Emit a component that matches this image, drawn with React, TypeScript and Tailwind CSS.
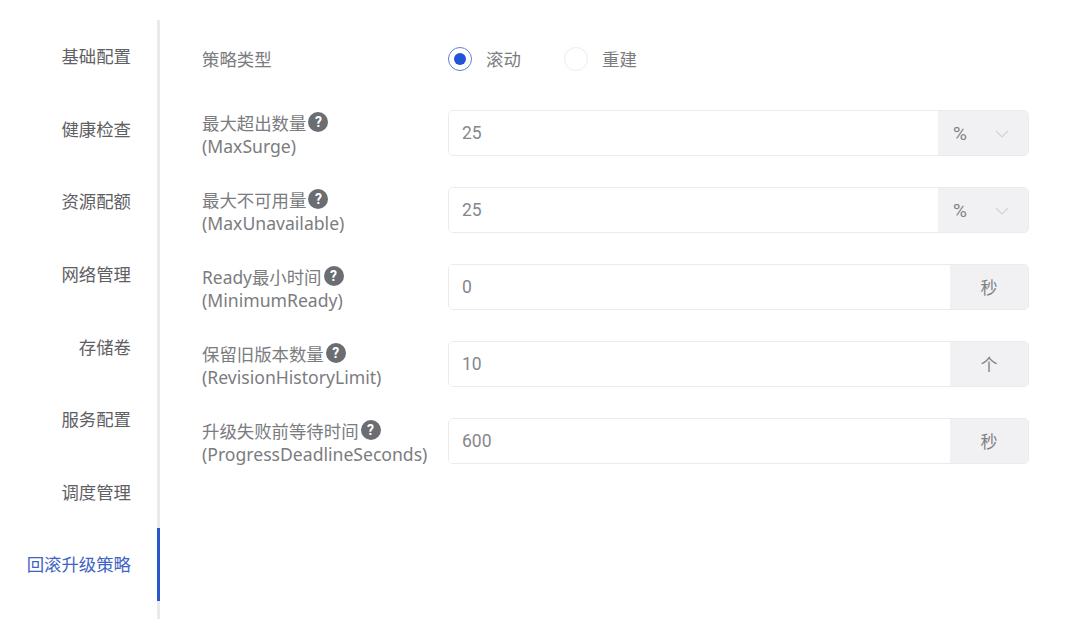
const FONT = "font-['Noto_Sans','Noto_Sans_CJK_SC',sans-serif]";

const nav = ["基础配置", "健康检查", "资源配额", "网络管理", "存储卷", "服务配置", "调度管理", "回滚升级策略"];

const rows = [
  { zh: "最大超出数量", en: "(MaxSurge)", value: "25", unit: "%", select: true },
  { zh: "最大不可用量", en: "(MaxUnavailable)", value: "25", unit: "%", select: true },
  { zh: "Ready最小时间", en: "(MinimumReady)", value: "0", unit: "秒", select: false },
  { zh: "保留旧版本数量", en: "(RevisionHistoryLimit)", value: "10", unit: "个", select: false },
  { zh: "升级失败前等待时间", en: "(ProgressDeadlineSeconds)", value: "600", unit: "秒", select: false },
];

function Help() {
  return (
    <span className="mt-[2px] ml-[2px] inline-flex h-[20px] w-[20px] items-center justify-center rounded-full bg-[#6b6d72] font-['Roboto',sans-serif] text-[14px] leading-none font-bold text-white">
      ?
    </span>
  );
}

function Chevron() {
  return (
    <svg width="14" height="8" viewBox="0 0 14 8" fill="none" stroke="#d3d4d8" strokeWidth="1.2">
      <path d="M1 1l6 6 6-6" />
    </svg>
  );
}

export default function App() {
  return (
    <div className={`${FONT} flex h-[619px] w-[1080px] overflow-hidden bg-white pt-[20px]`}>
      <nav className="h-full w-[160px] shrink-0 border-r-[3px] border-[#e9e9ee]">
        {nav.map((item, i) => {
          const active = i === nav.length - 1;
          return (
            <div
              key={item}
              className={`relative flex h-[72.6px] items-center justify-end pr-[26px] text-[17.4px] ${active ? "text-[#3f64c4]" : "text-[#5f6064]"}`}
            >
              {item}
              {active && <span className="absolute top-0 right-[-3px] h-[73px] w-[3px] bg-[#2b55c8]" />}
            </div>
          );
        })}
      </nav>

      <main className="w-[869px] pl-[42px]">
        <div className="flex h-[78px] items-start pt-[17px]">
          <div className="w-[246px] text-[17.4px] leading-[44px] text-[#7b7c80]">策略类型</div>
          <div className="flex h-[44px] items-center text-[17.4px] text-[#7b7c80]">
            <span className="flex h-[24px] w-[24px] items-center justify-center rounded-full border-[1.5px] border-[#5f7fd0]">
              <span className="h-[12px] w-[12px] rounded-full bg-[#1f55d6]" />
            </span>
            <span className="ml-[14px] w-[42px]">滚动</span>
            <span className="ml-[36px] h-[24px] w-[24px] rounded-full border-[1.5px] border-[#ececef]" />
            <span className="ml-[14px]">重建</span>
          </div>
        </div>

        <div className="mt-[12px] flex flex-col gap-[31px]">
          {rows.map((row) => (
            <div key={row.en} className="flex h-[46px] items-center">
              <div className="w-[246px] text-[#7b7c80]">
                <div className="flex h-[24px] items-center whitespace-nowrap text-[17.4px] leading-[24px]">
                  <span className="pt-[4px]">{row.zh}</span>
                  <Help />
                </div>
                <div className="h-[24px] text-[17.6px] leading-[26px] whitespace-nowrap">{row.en}</div>
              </div>
              <div className="flex h-[46px] w-[581px] overflow-hidden rounded-[5px] border border-[#ebebee]">
                <div className="flex flex-1 items-center bg-white pl-[13px] font-['Roboto',sans-serif] text-[17.5px] text-[#86878b]">{row.value}</div>
                {row.select ? (
                  <div className="flex w-[90px] items-center justify-between bg-[#f1f1f3] pt-[2px] pr-[19px] pl-[15px] font-['Roboto',sans-serif] text-[19px] text-[#808185]">
                    <span>{row.unit}</span>
                    <Chevron />
                  </div>
                ) : (
                  <div className="flex w-[78px] items-center justify-center bg-[#f1f1f3] pt-[2px] text-[17px] text-[#808185]">{row.unit}</div>
                )}
              </div>
            </div>
          ))}
        </div>
      </main>
    </div>
  );
}
